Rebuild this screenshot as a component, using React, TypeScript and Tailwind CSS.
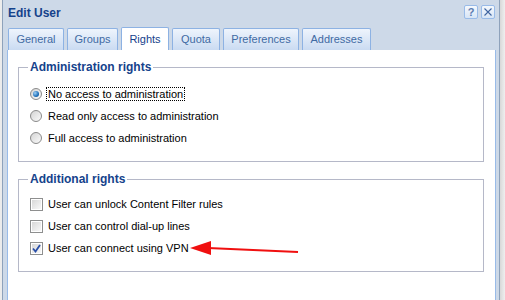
import React from "react";

function Radio({ checked }: { checked?: boolean }) {
  return (
    <span className="ml-[2px] w-[12px] h-[12px] rounded-full border border-[#8a8a8a] bg-linear-to-br from-[#d4d4d4] to-[#fbfbfb] flex items-center justify-center shrink-0">
      {checked && (
        <span className="w-[6px] h-[6px] rounded-full bg-[radial-gradient(circle_at_35%_35%,#9fd0f5,#1f6fb8_60%,#174f8a)]" />
      )}
    </span>
  );
}

function Check({ checked }: { checked?: boolean }) {
  return (
    <span className="ml-[2px] w-[13px] h-[13px] border border-[#8e8f8f] bg-white p-[1px] shrink-0 flex">
      <span className="flex-1 bg-linear-to-br from-[#d8d8d8] to-[#f8f8f8] flex items-center justify-center">
        {checked && (
          <svg width="9" height="9" viewBox="0 0 9 9">
            <path d="M1 4.5 L3.5 7.5 L8 1" stroke="#2a4fa8" strokeWidth="1.8" fill="none" />
          </svg>
        )}
      </span>
    </span>
  );
}

const tabs = [
  { label: "General", w: "w-[56px]" },
  { label: "Groups", w: "w-[51px]" },
  { label: "Rights", w: "w-[48px]", active: true },
  { label: "Quota", w: "w-[48px]" },
  { label: "Preferences", w: "w-[76px]" },
  { label: "Addresses", w: "w-[69px]" },
];

export default function App() {
  return (
    <div className="w-[505px] h-[300px] flex bg-[#e4e4e4] font-['Liberation_Sans',Arial,sans-serif] overflow-hidden relative">
      <div className="w-[2px] h-full bg-[#ececec]" />
      <div className="w-[498px] h-full border-l border-r border-[#8ea2bb] bg-[#cdd9e8] flex flex-col">
        {/* title bar */}
        <div className="h-[26px] flex items-center justify-between pl-[5px] pr-[4px]">
          <span className="text-[12px] font-bold text-[#15428b]">Edit User</span>
          <div className="flex gap-[3px] -mt-[2px]">
            <span className="w-[14px] h-[14px] rounded-[2px] border border-[#99bbe8] bg-linear-to-b from-[#f4f8fd] to-[#d7e5f6] flex items-center justify-center text-[11px] font-bold text-[#5a7cb0] leading-none">
              ?
            </span>
            <span className="w-[14px] h-[14px] rounded-[2px] border border-[#99bbe8] bg-linear-to-b from-[#f4f8fd] to-[#d7e5f6] flex items-center justify-center">
              <svg width="8" height="8" viewBox="0 0 8 8">
                <path d="M0.5 0.5 L7.5 7.5 M7.5 0.5 L0.5 7.5" stroke="#3e64a0" strokeWidth="1.1" />
              </svg>
            </span>
          </div>
        </div>
        {/* tabs */}
        <div className="h-[23px] flex items-end gap-[3px] pl-[5px] mt-[1px]">
          {tabs.map((t) => (
            <div
              key={t.label}
              className={`${t.w} h-[22px] rounded-t-[2px] border border-b-0 border-[#8db2e3] flex items-center justify-center text-[11px] ${
                t.active
                  ? "bg-white text-[#15428b] h-[23px]"
                  : "bg-linear-to-b from-[#eef4fc] to-[#cadbf2] text-[#416aa3]"
              }`}
            >
              {t.label}
            </div>
          ))}
        </div>
        {/* content */}
        <div className="flex-1 ml-[4px] mr-[3px] bg-white border-l border-r border-[#99bbe8] px-[10px] pt-[10px]">
          <fieldset className="border border-[#b5b8c8] pl-[9px] pb-[12px] w-[466px]">
            <legend className="px-[2px] text-[12px] leading-[14px] font-bold text-[#15428b]">Administration rights</legend>
            <div className="mt-[8px] h-[23px] flex items-center gap-[5px] text-[11px] text-black">
              <Radio checked />
              <span className="outline-1 outline-dotted outline-black px-[1px] leading-[12px]">No access to administration</span>
            </div>
            <div className="h-[22px] flex items-center gap-[5px] text-[11px] text-black">
              <Radio />
              <span className="px-[1px]">Read only access to administration</span>
            </div>
            <div className="h-[22px] flex items-center gap-[5px] text-[11px] text-black">
              <Radio />
              <span className="px-[1px]">Full access to administration</span>
            </div>
          </fieldset>
          <fieldset className="mt-[10px] border border-[#b5b8c8] pl-[9px] pb-[12px] w-[466px]">
            <legend className="px-[2px] text-[12px] leading-[14px] font-bold text-[#15428b]">Additional rights</legend>
            <div className="mt-[7px] h-[22px] flex items-center gap-[4px] text-[11px] text-black">
              <Check />
              <span className="px-[1px]">User can unlock Content Filter rules</span>
            </div>
            <div className="h-[22px] flex items-center gap-[4px] text-[11px] text-black">
              <Check />
              <span className="px-[1px]">User can control dial-up lines</span>
            </div>
            <div className="h-[22px] flex items-center gap-[4px] text-[11px] text-black">
              <Check checked />
              <span className="px-[1px]">User can connect using VPN</span>
            </div>
          </fieldset>
        </div>
      </div>
      <div className="flex-1 h-full bg-linear-to-r from-[#d8d8d8] to-[#efefef]" />
      <svg className="absolute left-0 top-0 pointer-events-none" width="505" height="300">
        <line x1="298" y1="252" x2="208" y2="248" stroke="#f01010" strokeWidth="2" />
        <polygon points="190,248 211,241 211,255" fill="#f01010" />
      </svg>
    </div>
  );
}
